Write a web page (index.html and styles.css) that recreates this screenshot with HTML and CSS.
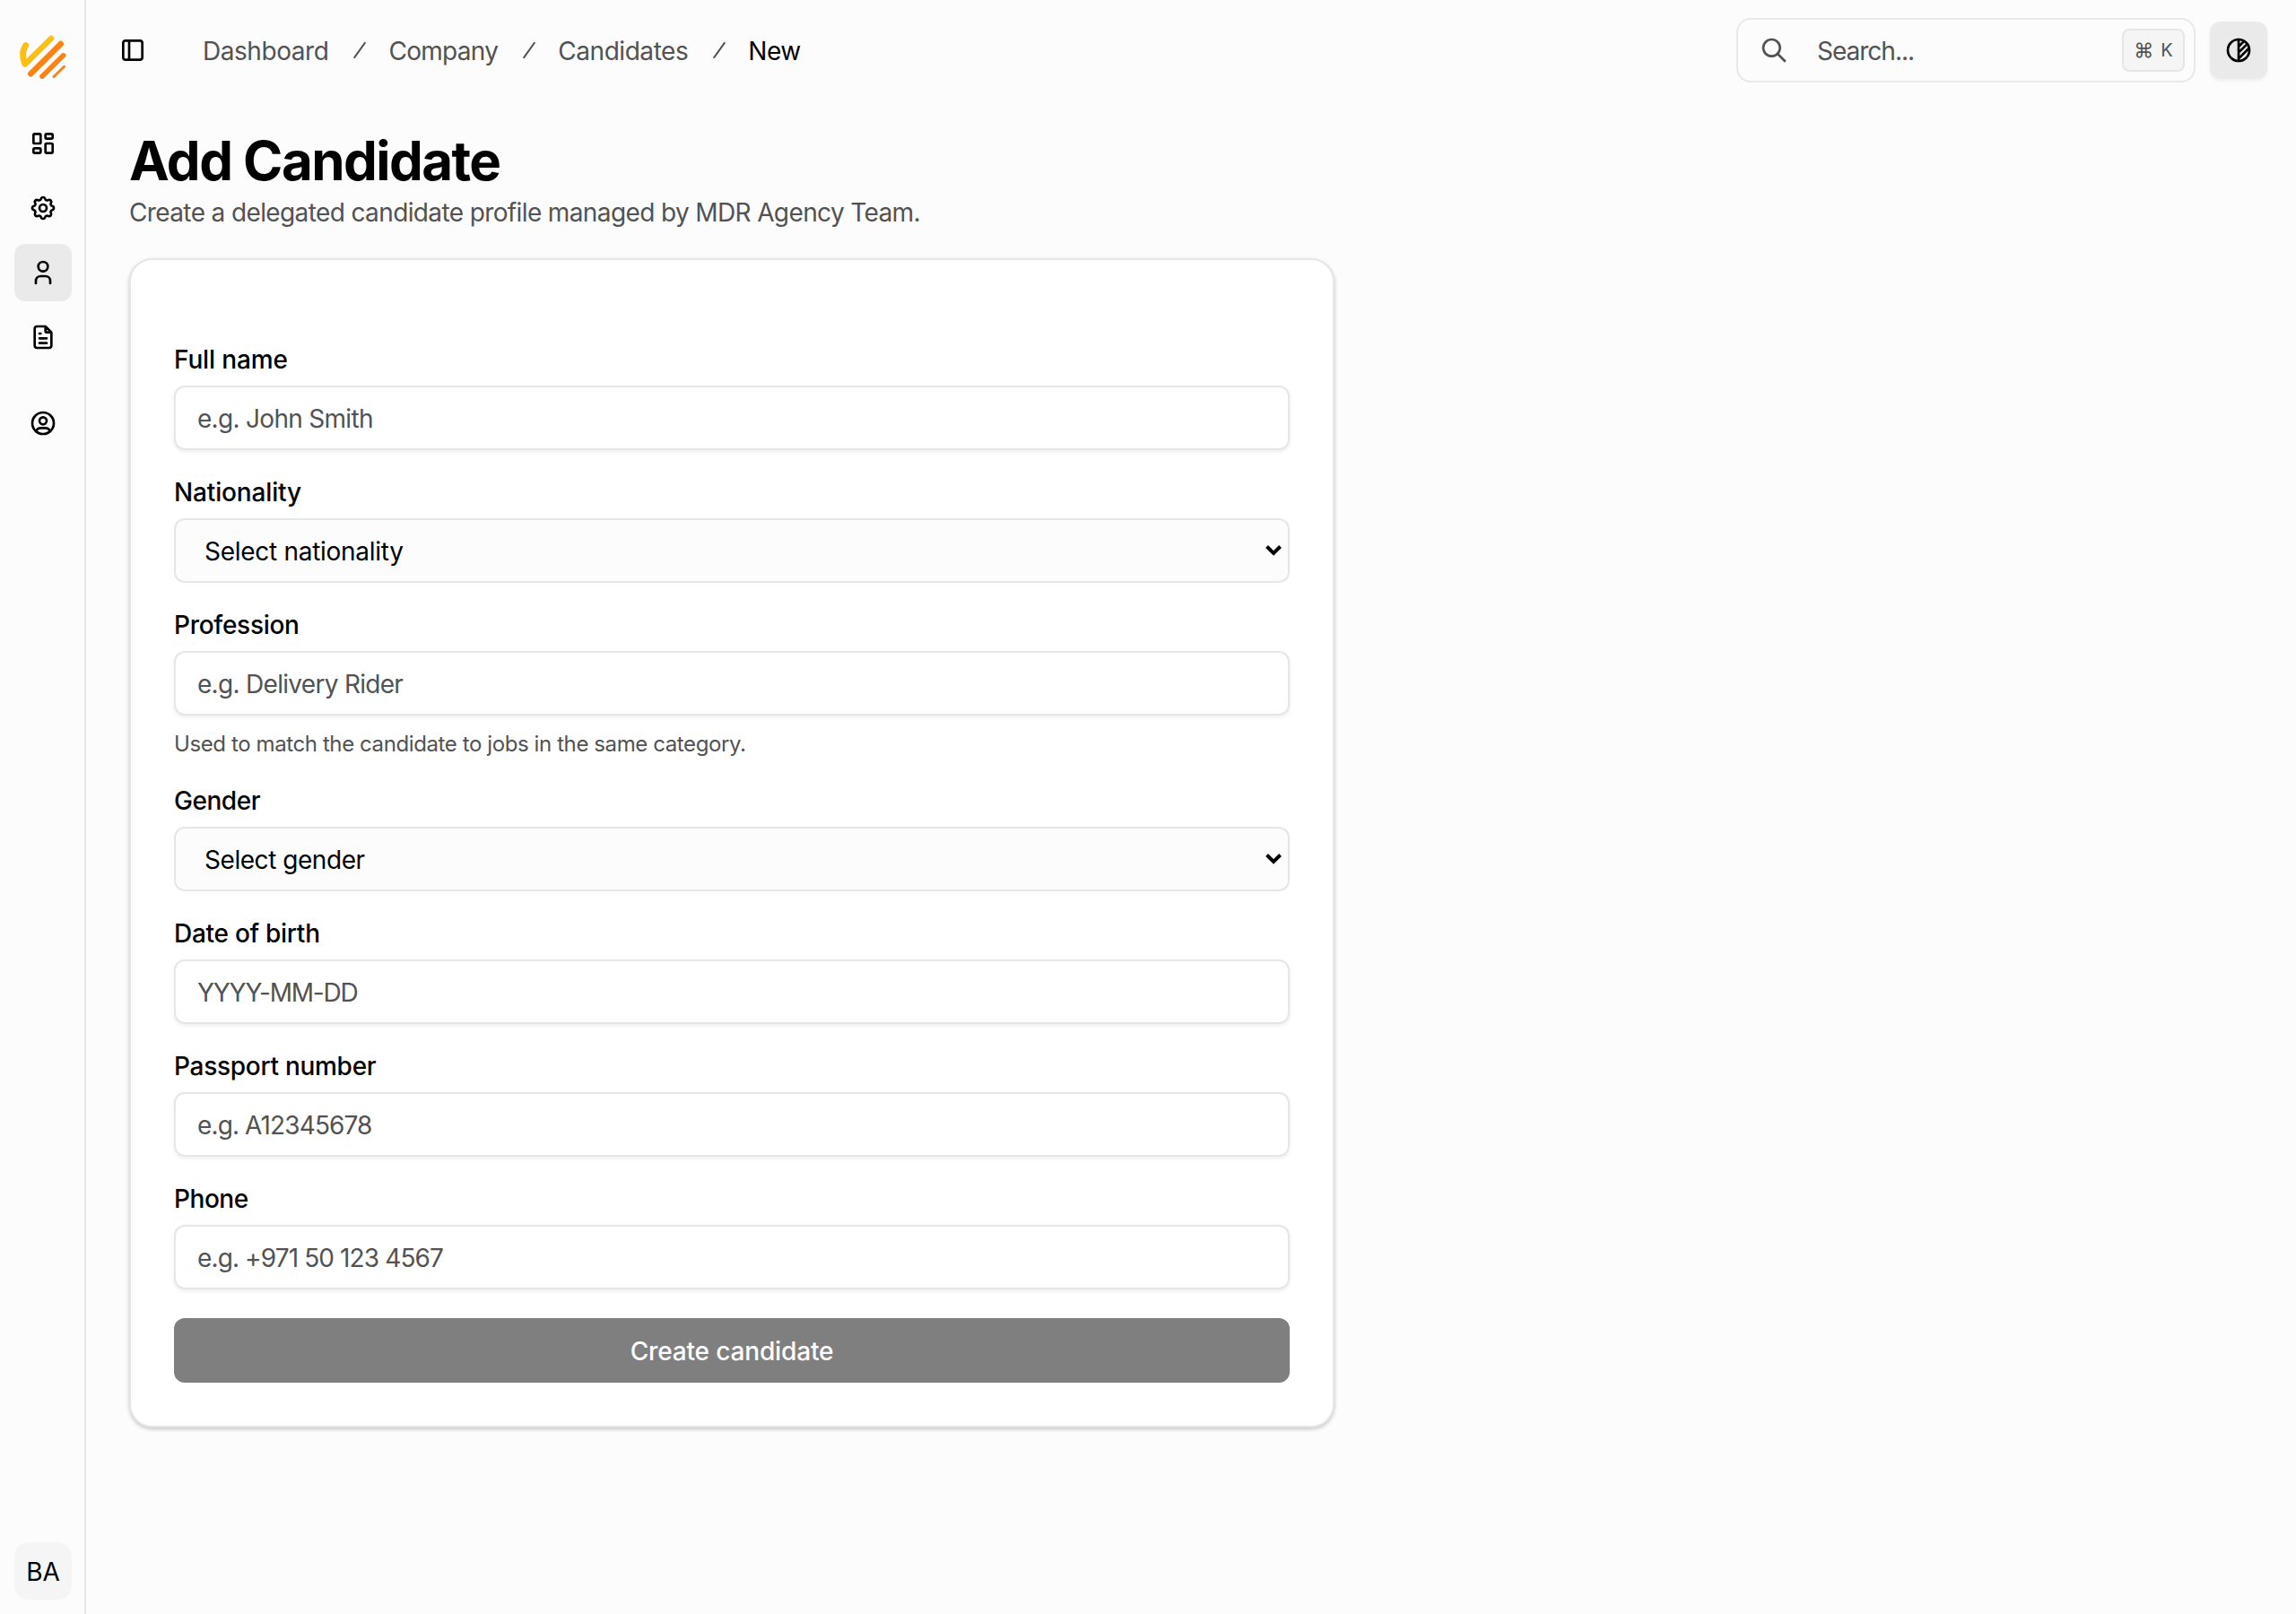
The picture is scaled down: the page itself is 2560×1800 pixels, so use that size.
FILE: index.html
```html
<!DOCTYPE html>
<html lang="en">
<head>
<meta charset="utf-8">
<title>Add Candidate</title>
<link rel="stylesheet" href="styles.css">
</head>
<body>
<div class="app">
  <aside class="sidebar">
    <svg class="logo" viewBox="0 0 64 64" fill="none" stroke-linecap="round">
      <g stroke="#fbbf15"><path stroke-width="7" d="M12.700 18.700Q7 27 11.500 38.500"/><path stroke-width="6.500" d="M12 39.500L41 11"/></g>
      <g stroke="#fa8316"><path stroke-width="6.500" d="M18.300 50.300L51.700 17"/><path stroke-width="5.500" d="M31 53.200L54.600 29.800"/><path stroke-width="3" d="M44 53.500L55.500 42.300"/></g>
    </svg>
    <nav class="nav">
      <a class="nav-item"><svg class="icon" viewBox="0 0 24 24"><path d="M5 4h4a1 1 0 0 1 1 1v6a1 1 0 0 1-1 1H5a1 1 0 0 1-1-1V5a1 1 0 0 1 1-1M5 16h4a1 1 0 0 1 1 1v2a1 1 0 0 1-1 1H5a1 1 0 0 1-1-1v-2a1 1 0 0 1 1-1M15 12h4a1 1 0 0 1 1 1v6a1 1 0 0 1-1 1h-4a1 1 0 0 1-1-1v-6a1 1 0 0 1 1-1M15 4h4a1 1 0 0 1 1 1v2a1 1 0 0 1-1 1h-4a1 1 0 0 1-1-1V5a1 1 0 0 1 1-1"/></svg></a>
      <a class="nav-item"><svg class="icon" viewBox="0 0 24 24"><path d="M10.325 4.317c.426-1.756 2.924-1.756 3.350 0a1.724 1.724 0 0 0 2.573 1.066c1.543-.94 3.310.826 2.370 2.370a1.724 1.724 0 0 0 1.065 2.572c1.756.426 1.756 2.924 0 3.350a1.724 1.724 0 0 0-1.066 2.573c.94 1.543-.826 3.310-2.370 2.370a1.724 1.724 0 0 0-2.572 1.065c-.426 1.756-2.924 1.756-3.350 0a1.724 1.724 0 0 0-2.573-1.066c-1.543.94-3.310-.826-2.370-2.370a1.724 1.724 0 0 0-1.065-2.572c-1.756-.426-1.756-2.924 0-3.350a1.724 1.724 0 0 0 1.066-2.573c-.94-1.543.826-3.310 2.370-2.370 1 .608 2.296.07 2.572-1.065z"/><circle cx="12" cy="12" r="3"/></svg></a>
      <a class="nav-item active"><svg class="icon" viewBox="0 0 24 24"><circle cx="12" cy="7" r="4"/><path d="M6 21v-2a4 4 0 0 1 4-4h4a4 4 0 0 1 4 4v2"/></svg></a>
      <a class="nav-item"><svg class="icon" viewBox="0 0 24 24"><path d="M14 3v4a1 1 0 0 0 1 1h4M17 21H7a2 2 0 0 1-2-2V5a2 2 0 0 1 2-2h7l5 5v11a2 2 0 0 1-2 2zM9 9h1M9 13h6M9 17h6"/></svg></a>
      <a class="nav-item account"><svg class="icon" viewBox="0 0 24 24"><circle cx="12" cy="12" r="9"/><circle cx="12" cy="10" r="3"/><path d="M6.168 18.849A4 4 0 0 1 10 16h4a4 4 0 0 1 3.834 2.855"/></svg></a>
    </nav>
    <div class="avatar"><span>BA</span></div>
  </aside>
  <div class="main">
    <header class="topbar">
      <svg class="icon toggle" viewBox="0 0 24 24"><rect x="4" y="4" width="16" height="16" rx="2"/><path d="M9 4v16"/></svg>
      <nav class="crumbs">
        <span class="track-3">Dashboard</span>
        <svg class="slash" viewBox="0 0 24 24"><path d="M17 5L7 19"/></svg>
        <span class="track-5">Company</span>
        <svg class="slash" viewBox="0 0 24 24"><path d="M17 5L7 19"/></svg>
        <span class="track-3">Candidates</span>
        <svg class="slash" viewBox="0 0 24 24"><path d="M17 5L7 19"/></svg>
        <span class="current track-3">New</span>
      </nav>
      <div class="search">
        <svg class="icon" viewBox="0 0 24 24"><circle cx="10" cy="10" r="7"/><path d="M21 21l-6-6"/></svg>
        <span class="search-text">Search...</span>
        <kbd class="kbd"><span class="cmd">⌘</span><span>K</span></kbd>
      </div>
      <button class="theme"><svg class="icon" viewBox="0 0 24 24"><circle cx="12" cy="12" r="9"/><path d="M12 3v18M12 14l7-7M12 19l8.500-8.500M12 9l4.500-4.500"/></svg></button>
    </header>
    <main class="content">
      <h1 class="title">Add Candidate</h1>
      <p class="subtitle">Create a delegated candidate profile managed by MDR Agency Team.</p>
      <form class="card">
        <div class="field"><label class="track-1">Full name</label><div class="input"><span class="track-5">e.g. John Smith</span></div></div>
        <div class="field"><label class="track-1">Nationality</label><div class="select"><span class="track-2">Select nationality</span><svg class="chevron" viewBox="0 0 20 14"><path d="M2.500 2.500L10 10l7.500-7.500"/></svg></div></div>
        <div class="field"><label class="track-2">Profession</label><div class="input"><span class="track-5">e.g. Delivery Rider</span></div><p class="hint">Used to match the candidate to jobs in the same category.</p></div>
        <div class="field"><label class="track-3">Gender</label><div class="select"><span class="track-3">Select gender</span><svg class="chevron" viewBox="0 0 20 14"><path d="M2.500 2.500L10 10l7.500-7.500"/></svg></div></div>
        <div class="field"><label class="track-2">Date of birth</label><div class="input"><span class="track-8">YYYY-MM-DD</span></div></div>
        <div class="field"><label class="track-2">Passport number</label><div class="input"><span class="track-6">e.g. A12345678</span></div></div>
        <div class="field"><label class="track-3">Phone</label><div class="input"><span class="track-6">e.g. +971 50 123 4567</span></div></div>
        <button class="submit" type="button"><span class="track-1">Create candidate</span></button>
      </form>
    </main>
  </div>
</div>
</body>
</html>
```
FILE: styles.css
```css
* { box-sizing: border-box; }

body {
  margin: 0;
  background: #fcfcfc;
  color: #000;
  font-family: Inter, "Liberation Sans", sans-serif;
  font-size: 28px;
  line-height: 40px;
}

/* Tracking steps, in units of about 0.15px */
.track-1 { letter-spacing: -0.15px; }
.track-2 { letter-spacing: -0.28px; }
.track-3 { letter-spacing: -0.45px; }
.track-5 { letter-spacing: -0.7px; }
.track-6 { letter-spacing: -0.88px; }
.track-8 { letter-spacing: -1.2px; }

.app { display: flex; height: 1800px; }

.icon {
  width: 32px;
  height: 32px;
  flex: none;
  fill: none;
  stroke: currentColor;
  stroke-width: 2;
  stroke-linecap: round;
  stroke-linejoin: round;
}

.sidebar {
  display: flex;
  flex-direction: column;
  flex: none;
  width: 96px;
  padding: 32px 14px 16px 16px;
  border-right: 2px solid #e6e6e6;
}

.logo { width: 64px; height: 64px; margin-bottom: 32px; }

.nav { display: flex; flex-direction: column; gap: 8px; }

.nav-item {
  display: flex;
  align-items: center;
  justify-content: center;
  width: 64px;
  height: 64px;
  border-radius: 12px;
}

.nav-item.active { background: #eaeaea; }
.nav-item.account { margin-top: 24px; }

.avatar {
  display: flex;
  align-items: center;
  justify-content: center;
  width: 64px;
  height: 64px;
  margin-top: auto;
  padding-top: 1px;
  border-radius: 16px;
  background: #f5f5f5;
}

.main { flex: 1; }

.topbar {
  display: flex;
  align-items: center;
  height: 112px;
  padding: 0 32px 0 36px;
}

.crumbs {
  display: flex;
  align-items: center;
  margin-left: 62px;
  color: #525252;
}

.crumbs span, .search-text, .input span, .select span { padding-top: 2px; }

.crumbs .current { color: #000; }

.slash {
  width: 28px;
  height: 28px;
  margin: 0 18px 0 21px;
  fill: none;
  stroke: currentColor;
  stroke-width: 1.7;
  stroke-linecap: round;
}

.search {
  display: flex;
  align-items: center;
  width: 512px;
  height: 72px;
  margin-left: auto;
  padding: 0 10px 0 24px;
  border: 2px solid #e8e8e8;
  border-radius: 16px;
  color: #525252;
}

.search-text { margin-left: 32px; letter-spacing: -1px; }

.kbd {
  display: flex;
  align-items: center;
  justify-content: center;
  gap: 8px;
  width: 70px;
  height: 48px;
  margin-left: auto;
  border: 2px solid #e6e6e6;
  border-radius: 8px;
  background: #f5f5f5;
  font-family: inherit;
  font-size: 20px;
}

.cmd { font-size: 22px; }

.theme {
  display: flex;
  align-items: center;
  justify-content: center;
  width: 64px;
  height: 64px;
  margin-left: 16px;
  padding: 0;
  border: 0;
  border-radius: 12px;
  background: #eaeaea;
  color: #000;
  box-shadow: 0 2px 4px rgba(0, 0, 0, 0.06);
}

.content { width: 1440px; padding: 31px 48px; }

.title {
  margin: 0;
  font-size: 60px;
  font-weight: 700;
  line-height: 72px;
  letter-spacing: -1.55px;
}

.subtitle {
  margin: 2px 0 31px;
  color: #525252;
  line-height: 40px;
  letter-spacing: -0.62px;
}

.card {
  display: flex;
  flex-direction: column;
  gap: 32px;
  width: 1344px;
  padding: 96px 48px 48px;
  border: 2px solid #e6e6e6;
  border-radius: 26px;
  background: #fff;
  box-shadow: 0 2px 4px rgba(0, 0, 0, 0.22);
}

.field { display: flex; flex-direction: column; gap: 16px; }

label { margin-bottom: -2px; font-weight: 500; line-height: 30px; }

.input, .select {
  display: flex;
  align-items: center;
  height: 72px;
  border: 2px solid #e6e6e6;
  border-radius: 12px;
}

.input {
  padding: 0 24px;
  color: #525252;
  box-shadow: 0 2px 4px rgba(0, 0, 0, 0.07);
}

.select {
  justify-content: space-between;
  padding: 0 6px 0 32px;
  background: #fcfcfc;
}

.chevron { width: 20px; height: 14px; fill: none; stroke: #000; stroke-width: 4; }

.hint {
  margin: 0;
  color: #525252;
  font-size: 24px;
  line-height: 32px;
  letter-spacing: -0.4px;
}

.submit {
  height: 72px;
  padding: 1px 0 0;
  border: 0;
  border-radius: 12px;
  background: #7f7f7f;
  color: #fff;
  font: inherit;
  font-weight: 500;
}
```
